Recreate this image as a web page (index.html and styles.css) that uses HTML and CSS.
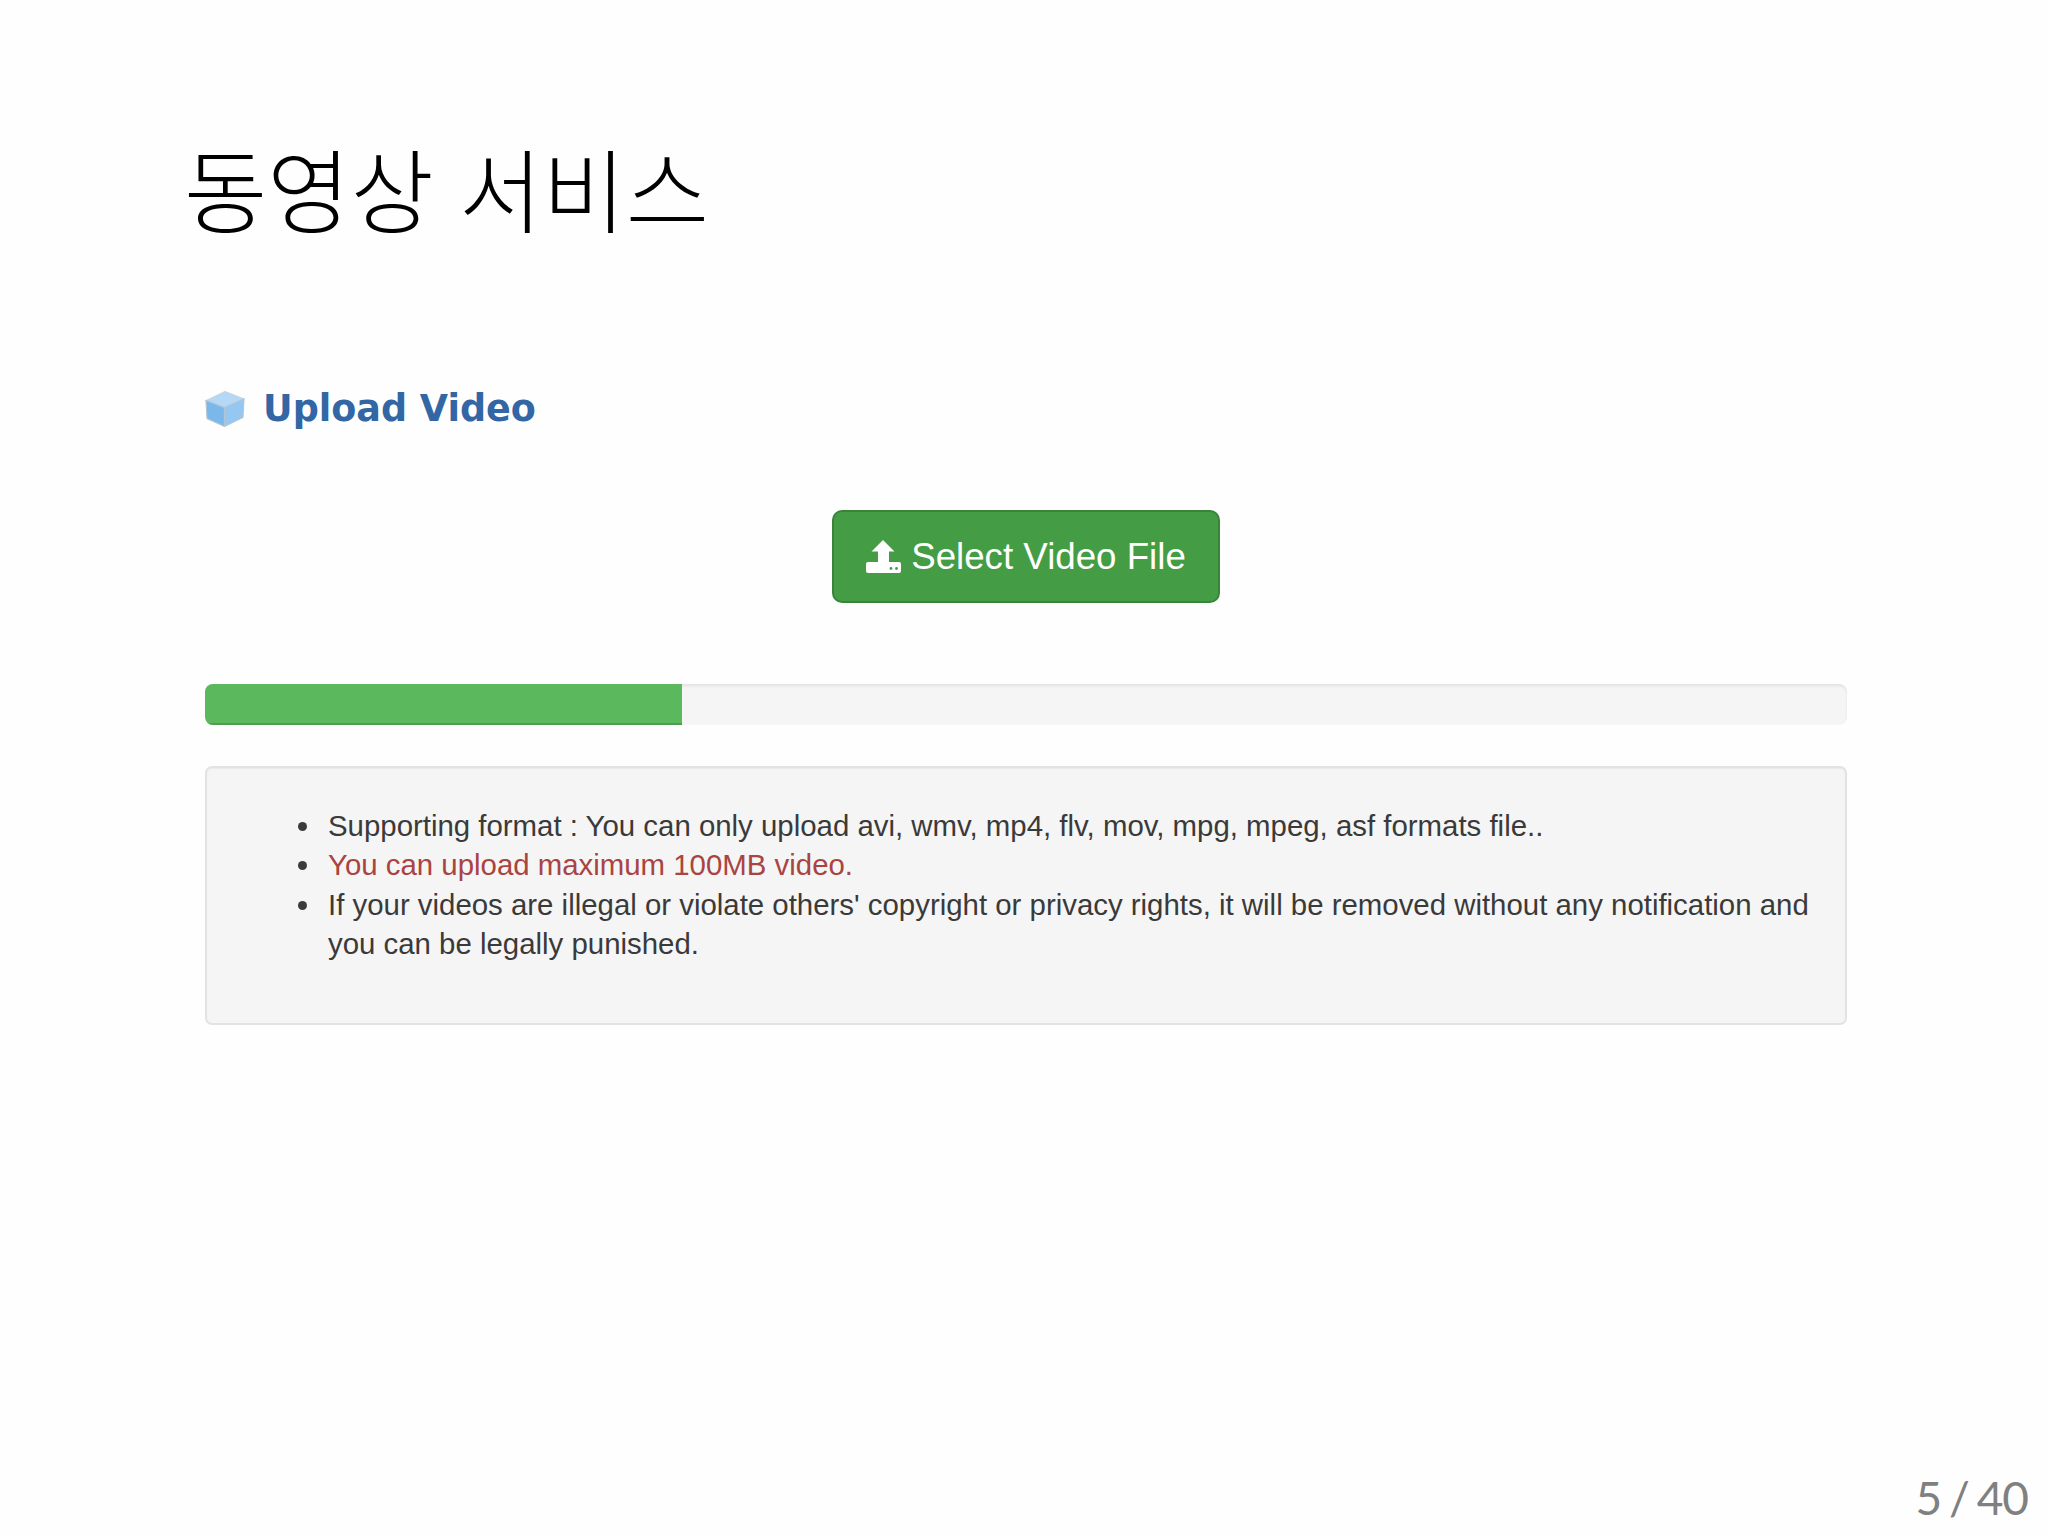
FILE: index.html
```html
<!DOCTYPE html>
<html lang="ko">
<head>
<meta charset="UTF-8">
<title>동영상 서비스</title>
<link rel="stylesheet" href="styles.css">
</head>
<body>
<div class="slide">
    <h1 class="slide-title">동영상 서비스</h1>

    <div class="content">
        <h2 class="section-title">
            <svg class="cube-icon" viewBox="0 0 37 34">
                <path d="M18.500 0.500L36.500 7.500L18 15.500L0.500 9Z" fill="#b4d8f6" stroke="#c9d4dc" stroke-width="1"/>
                <path d="M0.500 9L18 15.500V33.500L1.500 26Z" fill="#7ab8ec" stroke="#b5c4d0" stroke-width="1"/>
                <path d="M18 15.500L36.500 7.500L35.500 25L18 33.500Z" fill="#94c8f3" stroke="#b5c4d0" stroke-width="1"/>
            </svg>
            Upload Video
        </h2>

        <div class="button-row">
            <button class="upload-button">
                <svg class="upload-icon" viewBox="0 0 35 33">
                    <path d="M17 0L28.500 11.500H23V23H12V11.500H5.500Z" fill="#fff"/>
                    <rect x="0" y="22" width="35" height="11" rx="2" fill="#fff"/>
                    <circle cx="25" cy="28.500" r="1.400" fill="#449d44"/>
                    <circle cx="30.500" cy="28.500" r="1.400" fill="#449d44"/>
                </svg>
                Select Video File
            </button>
        </div>

        <div class="progress">
            <div class="progress-bar"></div>
        </div>

        <div class="well">
            <ul>
                <li>Supporting format : You can only upload avi, wmv, mp4, flv, mov, mpg, mpeg, asf formats file..</li>
                <li><span class="warning">You can upload maximum 100MB video.</span></li>
                <li>If your videos are illegal or violate others' copyright or privacy rights, it will be removed without any notification and you can be legally punished.</li>
            </ul>
        </div>
    </div>

    <div class="page-number">5 / 40</div>
</div>
</body>
</html>
```

FILE: styles.css
```css
* {
    box-sizing: border-box;
    margin: 0;
    padding: 0;
}
html, body {
    height: 100%;
}
body {
    background-color: #fefefe;
    font-family: "Liberation Sans", Arial, sans-serif;
    color: #3a3a3a;
    overflow: hidden;
}
.slide {
    display: flex;
    flex-direction: column;
    height: 1537px;
}
.slide-title {
    font-family: "Noto Sans CJK KR", sans-serif;
    font-weight: 300;
    font-size: 90.500px;
    line-height: 124px;
    color: #000000;
    padding: 125px 0 0 184px;
}
.content {
    padding: 0 201px 0 205px;
}
.section-title {
    display: flex;
    align-items: center;
    gap: 18px;
    font-family: "DejaVu Sans", sans-serif;
    font-size: 36.500px;
    font-weight: bold;
    line-height: 44px;
    color: #3366a4;
    margin-top: 138px;
}
.cube-icon {
    width: 40px;
    height: 36px;
}
.button-row {
    display: flex;
    justify-content: center;
    margin-top: 79px;
}
.upload-button {
    display: flex;
    align-items: center;
    gap: 10px;
    width: 388px;
    height: 93px;
    justify-content: center;
    font-family: "Liberation Sans", Arial, sans-serif;
    font-size: 36.700px;
    color: #ffffff;
    background-color: #449d44;
    border: 2px solid #398439;
    border-radius: 10px;
}
.upload-icon {
    width: 35px;
    height: 33px;
}
.progress {
    height: 41px;
    margin-top: 81px;
    background-color: #f5f5f5;
    border-radius: 8px;
    overflow: hidden;
    box-shadow: inset 0 2px 3px rgba(0,0,0,0.08);
}
.progress-bar {
    width: 477px;
    height: 100%;
    background-color: #5cb85c;
    box-shadow: inset 0 -2px 0 rgba(0,0,0,0.15);
}
.well {
    height: 259px;
    margin-top: 41px;
    padding: 38px 10px 0 0;
    background-color: #f5f5f5;
    border: 2px solid #e3e3e3;
    border-radius: 7px;
    box-shadow: inset 0 1px 1px rgba(0,0,0,0.05);
}
.well ul {
    list-style: none;
    padding-left: 121px;
    font-size: 29.400px;
    line-height: 39.300px;
}
.well li::before {
    content: "";
    display: inline-block;
    width: 9px;
    height: 9px;
    margin-left: -30px;
    margin-right: 21px;
    vertical-align: 5px;
    border-radius: 50%;
    background-color: #3a3a3a;
}
.warning {
    color: #a94442;
}
.page-number {
    margin-top: auto;
    padding: 0 20px 9px 0;
    text-align: right;
    font-family: Lato, sans-serif;
    font-size: 46px;
    line-height: 60px;
    word-spacing: -3px;
    letter-spacing: -1px;
    color: #808080;
}
```
